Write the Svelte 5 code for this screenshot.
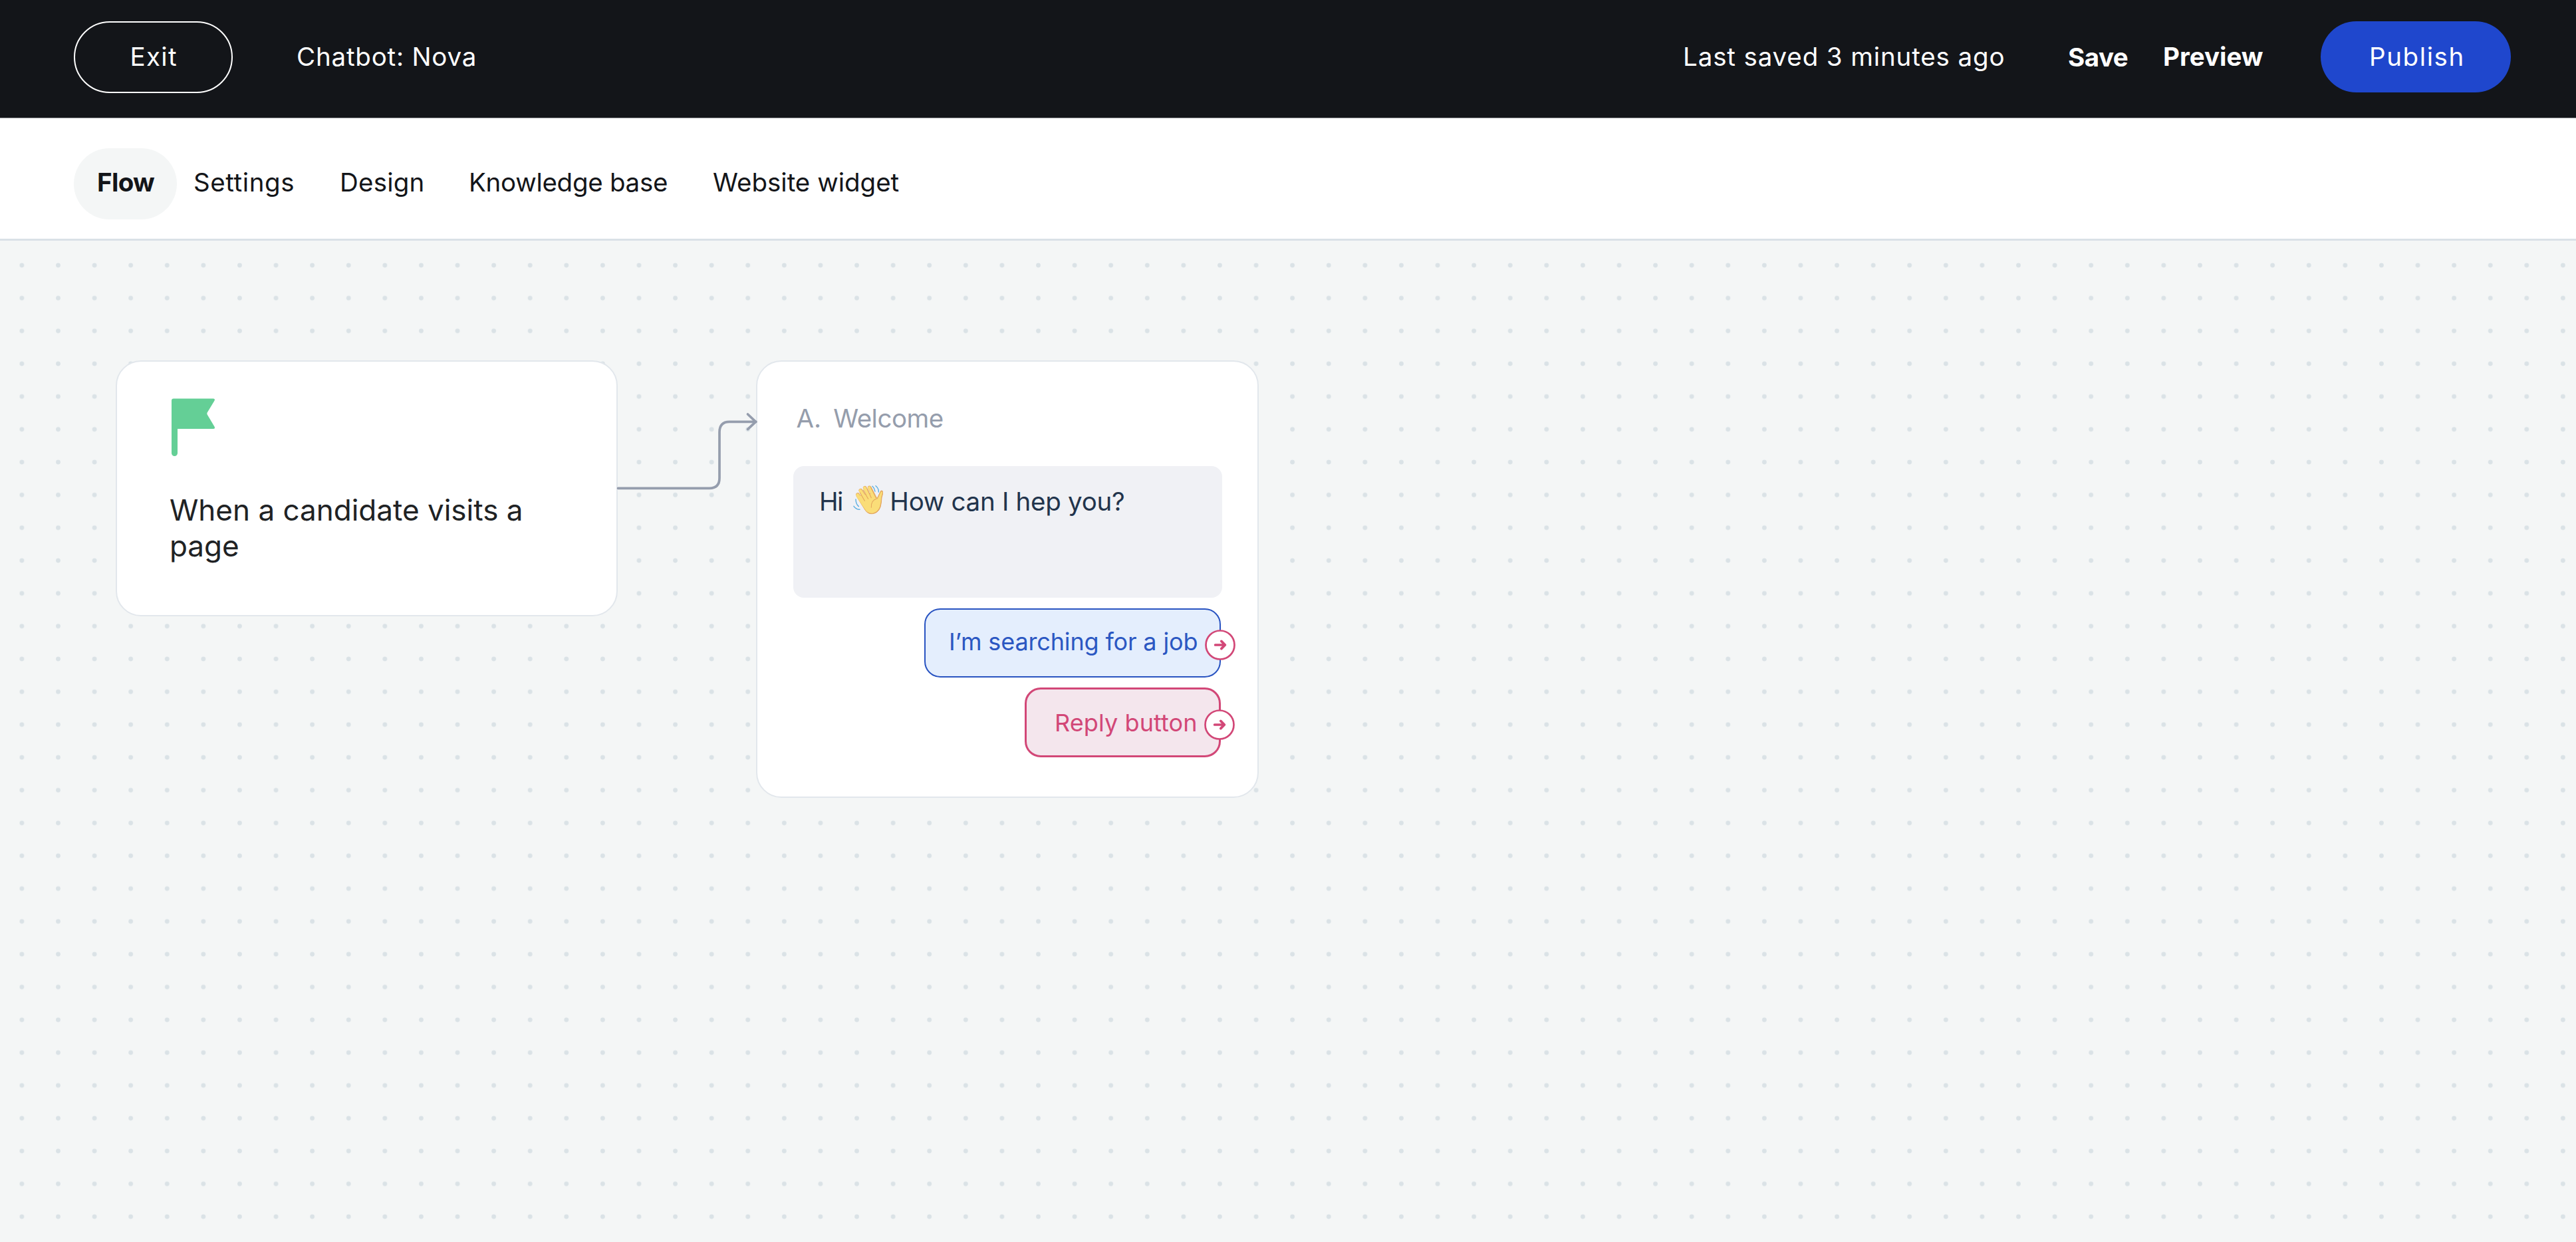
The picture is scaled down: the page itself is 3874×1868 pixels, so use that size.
<script>
  const tabs = [
    { label: 'Flow', cls: 'flow' },
    { label: 'Settings', cls: 'settings' },
    { label: 'Design', cls: 'design' },
    { label: 'Knowledge base', cls: 'knowledge' },
    { label: 'Website widget', cls: 'widget' }
  ];
  const replies = [
    { label: 'I’m searching for a job', cls: 'primary' },
    { label: 'Reply button', cls: 'accent' }
  ];
  let active = $state('Flow');
</script>

<div class="app">
  <header>
    <button class="exit">Exit</button>
    <span class="title">Chatbot: Nova</span>
    <div class="actions">
      <span class="saved">Last saved 3 minutes ago</span>
      <button class="save">Save</button>
      <button class="preview">Preview</button>
      <button class="publish">Publish</button>
    </div>
  </header>

  <nav>
    {#each tabs as tab}
      <button class="tab {tab.cls}" class:active={active === tab.label} onclick={() => (active = tab.label)}>{tab.label}</button>
    {/each}
  </nav>

  <main>
    <svg class="grid" width="3874" height="1506" aria-hidden="true">
      <defs>
        <pattern id="dots" x="5.6" y="12.33" width="54.593" height="49.34" patternUnits="userSpaceOnUse">
          <circle cx="27.3" cy="24.67" r="3.4" fill="#dae2e6" />
        </pattern>
      </defs>
      <rect width="3874" height="1506" fill="url(#dots)" />
    </svg>

    <section class="card trigger">
      <svg class="flag" width="66" height="87" viewBox="0 0 66 87" aria-hidden="true">
        <path d="M3 .4H62.6q3.2.2 2 3L53.7 21.4q-.8 1.5 0 3L64.7 43q1.2 2.9-2 3H9V82.500a4.500 4.500 0 0 1-9 0V3.400Q0 .4 3 .4z" fill="#64cf96" />
      </svg>
      <p>When a candidate visits a page</p>
    </section>

    <section class="card step">
      <h2><span>A.</span><span>Welcome</span></h2>
      <div class="message">
        <span class="hi">Hi</span>
        <svg class="wave" width="45.3" height="45" viewBox="24 21 136 135" fill="none" stroke-linecap="round" stroke-linejoin="round" role="img" aria-label="waving hand">
          <g stroke="#e3a45c" fill="#e3a45c">
            <path stroke-width="17" fill="none" d="M45 66 77 116M58 47 90 99M77 35 105 92M98 34 122 80" />
            <path stroke-width="3" d="M40 74 78 135Q91 155 112 152 137 149 147 122 152 104 153 80L159 57Q158 45 149 49L133 82 104 62z" />
          </g>
          <g stroke="#fadd78" fill="#fadd78">
            <path stroke-width="14" fill="none" d="M44 67 77 116M57 48 90 99M76 36 105 92M97 35 122 80" />
            <path stroke-width="1" d="M39 74 78 133Q91 152 112 149 134 146 144 121 149 103 150 80L156 57Q155 50 150 53L134 86 104 62z" />
          </g>
          <path d="M55 57 76 94M69 45 92 85M88 40 106 80M104 33 127 80M130 84Q104 92 106 124" stroke="#e3a45c" stroke-width="3.2" />
          <path d="M111 28Q121 37 123 51M126 26Q140 37 139 54M36 87Q36 108 49 119M27 118Q37 133 54 133" stroke="#5aaee0" stroke-width="4.2" />
        </svg>
        <span class="question">How can I hep you?</span>
      </div>
      {#each replies as reply}
        <div class="reply {reply.cls}">
          {reply.label}
          <svg class="handle" width="46" height="46" viewBox="0 0 46 46" fill="none" stroke="#d24777" stroke-linecap="round" stroke-linejoin="round" aria-hidden="true">
            <circle cx="23" cy="23" r="21.5" fill="#fff" stroke-width="2.7" />
            <path d="M15.6 23H30M24.8 17.4 30.4 23 24.8 28.6" stroke-width="3.7" />
          </svg>
        </div>
      {/each}
    </section>

    <svg class="connector" width="220" height="130" viewBox="0 0 220 130" fill="none" stroke="#959dad" stroke-width="3.7" stroke-linecap="round" stroke-linejoin="round" aria-hidden="true">
      <path d="M9.5 114.300H147Q162 114.300 162 99V30Q162 14.300 177 14.300H217" />
      <path d="M204.500 3 216.500 14.300 204.500 25.600" />
    </svg>
  </main>
</div>

<style>
  :global(body) { margin: 0; }
  .app {
    width: 3874px;
    height: 1868px;
    display: flex;
    flex-direction: column;
    overflow: hidden;
    background: #f4f6f6;
    font: 400 38.5px/54px Inter, "Liberation Sans", sans-serif;
    color: #131519;
  }
  .app * { box-sizing: border-box; }
  button {
    display: flex;
    align-items: center;
    border: 0;
    margin: 0;
    padding: 0;
    background: none;
    font: inherit;
    color: inherit;
    white-space: nowrap;
    cursor: pointer;
  }
  header {
    height: 178px;
    flex: none;
    display: flex;
    align-items: center;
    padding: 0 98px 6px 111px;
    background: #131519;
    border-bottom: 1px solid #a3a4a8;
    color: #fff;
  }
  .exit {
    width: 239px;
    height: 108px;
    padding: 0 0 2px 82.5px;
    border: 2px solid #fff;
    border-radius: 54px;
    letter-spacing: 1.3px;
  }
  .title { margin-left: 96px; padding-bottom: 2px; letter-spacing: .8px; }
  .actions { display: flex; align-items: center; margin-left: auto; }
  .saved { width: 579px; padding-bottom: 2px; letter-spacing: .87px; }
  .save { width: 143px; font-weight: 700; letter-spacing: -.5px; }
  .preview { width: 237px; padding-bottom: 2px; font-weight: 700; }
  .publish {
    width: 286px;
    height: 107px;
    padding: 0 0 2px 73px;
    border-radius: 54px;
    background: #1f47cd;
    letter-spacing: 1.6px;
  }
  nav {
    height: 184px;
    flex: none;
    display: flex;
    align-items: flex-start;
    padding: 45px 0 0 111px;
    background: #fff;
    border-bottom: 3px solid #dae1e7;
  }
  .tab { height: 107px; padding-bottom: 5px; }
  .flow { width: 155px; padding-left: 35px; margin-right: 25px; border-radius: 54px; letter-spacing: -.7px; }
  .active { background: #f4f6f6; font-weight: 700; }
  .settings { width: 220px; letter-spacing: .6px; }
  .design { width: 194px; letter-spacing: .2px; }
  .knowledge { width: 367px; letter-spacing: -.28px; }
  .widget { letter-spacing: 0; }
  main { position: relative; flex: 1; overflow: hidden; }
  .grid { display: block; }
  .card {
    position: absolute;
    top: 180px;
    background: #fff;
    border: 2px solid #e2e7ec;
    border-radius: 38px;
  }
  .trigger {
    left: 174px;
    width: 755px;
    height: 385px;
    padding: 55px 80px 0 79px;
    color: #202224;
    font-size: 44px;
  }
  .flag { display: block; margin-left: 3px; }
  .trigger p { margin: 54px 0 0; width: 560px; }
  .step {
    left: 1137px;
    width: 756px;
    height: 658px;
    padding: 58px 53.5px 0 54px;
    display: flex;
    flex-direction: column;
    align-items: flex-start;
  }
  h2 {
    display: flex;
    gap: 18px;
    margin: 0 0 45px 4.5px;
    font: inherit;
    color: #959dac;
  }
  h2 span:last-child { letter-spacing: -.5px; }
  .message {
    width: 644.5px;
    height: 198px;
    flex: none;
    display: flex;
    align-items: flex-start;
    padding: 26px 0 0 39px;
    margin-bottom: 16px;
    border-radius: 16px;
    background: #f0f1f5;
    color: #22344c;
    white-space: nowrap;
  }
  .hi { width: 51px; letter-spacing: -1.5px; }
  .wave { margin-top: 2px; }
  .question { margin-left: 10px; letter-spacing: -.28px; }
  .reply {
    position: relative;
    display: flex;
    align-items: center;
    align-self: flex-end;
    margin-right: 1.5px;
    border-radius: 24px;
    font-size: 36px;
    white-space: nowrap;
  }
  .primary {
    width: 446px;
    height: 104px;
    padding: 0 0 4px 35px;
    margin-bottom: 15px;
    border: 2px solid #2853c1;
    background: #e4eefd;
    color: #2b57c2;
    letter-spacing: -.15px;
  }
  .accent {
    width: 295px;
    height: 105px;
    padding-left: 42px;
    border: 3px solid #d24777;
    background: #f4e6ed;
    color: #d24777;
    letter-spacing: .1px;
  }
  .handle { position: absolute; top: 30px; right: -23.5px; }
  .connector { position: absolute; left: 920px; top: 258px; }
</style>
